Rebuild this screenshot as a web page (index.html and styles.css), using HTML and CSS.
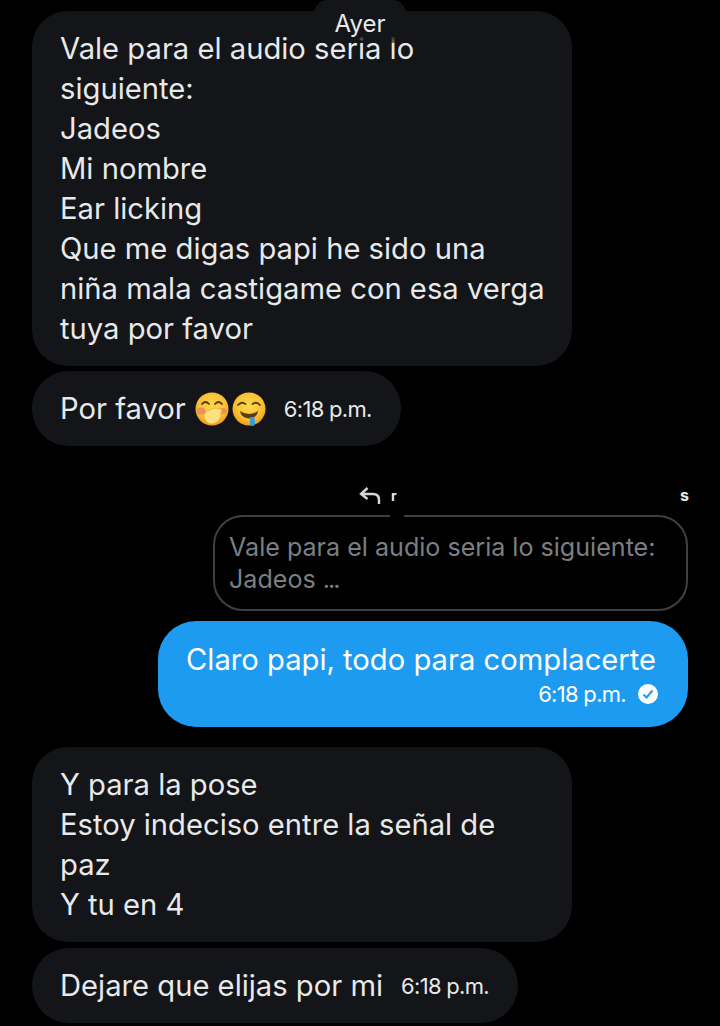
FILE: index.html
```html
<!DOCTYPE html>
<html lang="es">
<head>
  <meta charset="UTF-8">
  <meta name="viewport" content="width=device-width, initial-scale=1.0">
  <title>Mensajes</title>
  <link rel="stylesheet" href="styles.css">
</head>
<body>
  <div class="day-label">Ayer</div>

  <div class="thread">
    <div class="group">
      <div class="bubble in wide">Vale para el audio seria lo<br>siguiente:<br>Jadeos<br>Mi nombre<br>Ear licking<br>Que me digas papi he sido una<br>niña mala castigame con esa verga<br>tuya por favor</div>
      <div class="bubble in short">
        <span>Por favor</span>
        <span class="emojis">
          <svg width="34" height="34" viewBox="0 0 34 34">
            <defs>
              <radialGradient id="face" cx="50%" cy="40%" r="60%">
                <stop offset="0%" stop-color="#fcd84f"/>
                <stop offset="70%" stop-color="#f8c030"/>
                <stop offset="100%" stop-color="#ee9a1c"/>
              </radialGradient>
            </defs>
            <circle cx="17" cy="17" r="16.500" fill="url(#face)"/>
            <ellipse cx="6" cy="19" rx="4.500" ry="3.500" fill="#ee8f5c"/>
            <ellipse cx="28" cy="19" rx="3.500" ry="3" fill="#ee8f5c"/>
            <path d="M7 12q3.500-4 7 0M20 12q3.500-4 7 0" fill="none" stroke="#5b3a14" stroke-width="1.800" stroke-linecap="round"/>
            <path d="M9 24q0-3 3-5l8-3q2-.5 2.500 1l3 0q2 1 1 3l-1 2q1 1 0 3q-3 7-9 7q-7-1-7.500-8z" fill="#fce27e" stroke="#e6ad34" stroke-width=".8"/>
          </svg>
          <svg width="34" height="34" viewBox="0 0 34 34">
            <circle cx="17" cy="17" r="16.500" fill="url(#face)"/>
            <path d="M6 13q3.500-4 7.500-1M20.500 12q4-3 7.500 1" fill="none" stroke="#5b3a14" stroke-width="1.800" stroke-linecap="round"/>
            <path d="M8 19q9 6 18 0q-1 7-9 7.500q-8-.5-9-7.500z" fill="#5b3a14"/>
            <path d="M18 25h4.500l.5 6q0 3-2.500 3t-2.500-3z" fill="#2f9fd8"/>
          </svg>
        </span>
        <span class="time">6:18 p.m.</span>
      </div>
    </div>

    <div class="reply-head">
      <svg class="reply-icon" width="24" height="20" viewBox="0 0 24 20">
        <path d="M9.500 3L3 9L9.500 14M3.500 9H15q6 0 6 6v4" fill="none" stroke="#d6d6d6" stroke-width="2.400"/>
      </svg>
      <span class="reply-frag">r</span>
      <span class="reply-end">s</span>
    </div>

    <div class="quote">
      <span class="quote-notch"></span>
      Vale para el audio seria lo siguiente:<br>Jadeos <span class="dots">...</span>
    </div>

    <div class="bubble out">
      <div>Claro papi, todo para complacerte</div>
      <div class="out-meta">
        <span class="time">6:18 p.m.</span>
        <svg width="20" height="20" viewBox="0 0 20 20">
          <circle cx="10" cy="10" r="10" fill="#fff"/>
          <path d="M5.500 10.500l3 3l6-7" fill="none" stroke="#1d9bf0" stroke-width="2"/>
        </svg>
      </div>
    </div>

    <div class="group last">
      <div class="bubble in wide">Y para la pose<br>Estoy indeciso entre la señal de<br>paz<br>Y tu en 4</div>
      <div class="bubble in short">
        <span>Dejare que elijas por mi</span>
        <span class="time">6:18 p.m.</span>
      </div>
    </div>
  </div>
</body>
</html>
```

FILE: styles.css
```css
body {
  margin: 0;
  height: 1026px;
  overflow: hidden;
  position: relative;
  background: #000;
  font-family: 'Inter', 'Liberation Sans', sans-serif;
  font-size: 29.2px;
  color: #e7e9ea;
}
.thread {
  display: flex;
  flex-direction: column;
  align-items: flex-end;
  padding: 11px 32px 0;
}
.group {
  align-self: stretch;
  display: flex;
  flex-direction: column;
  align-items: flex-start;
  gap: 5px;
}
.group.last {
  margin-top: 20px;
  gap: 6px;
}
.bubble {
  background: #141518;
  line-height: 40px;
  box-sizing: border-box;
  white-space: nowrap;
}
.bubble.in {
  padding: 18px 28px 17px;
  border-radius: 36px;
}
.bubble.wide {
  width: 540px;
}
.bubble.short {
  display: flex;
  align-items: center;
  height: 75px;
  padding: 0 29px 0 28px;
  border-radius: 37px;
}
.time {
  font-size: 22px;
  letter-spacing: -0.7px;
  color: #e7e9ea;
  margin-left: 18px;
}
.emojis {
  display: flex;
  gap: 3px;
  margin-left: 9px;
}
.reply-head {
  align-self: stretch;
  display: flex;
  align-items: center;
  height: 30px;
  margin-top: 34px;
  padding-left: 326px;
  font-size: 14px;
  font-weight: 700;
  color: #e7e9ea;
}
.reply-frag {
  margin-left: 9px;
}
.reply-end {
  margin-left: auto;
  margin-right: -1px;
  font-size: 16px;
}
.quote {
  position: relative;
  box-sizing: border-box;
  width: 475px;
  height: 96px;
  margin-top: 5px;
  padding: 14px 14px 0;
  border: 2px solid #3e4043;
  border-radius: 30px;
  font-size: 25.100px;
  line-height: 32px;
  color: #7a7f84;
}
.quote-notch {
  position: absolute;
  top: -3px;
  left: 175px;
  width: 14px;
  height: 5px;
  background: #000;
}
.dots {
  letter-spacing: -2px;
}
.bubble.out {
  width: 530px;
  height: 106px;
  margin-top: 10px;
  padding: 19px 28px 0;
  background: #1d9bf0;
  color: #fff;
  border-radius: 38px;
  line-height: 40px;
}
.out-meta {
  display: flex;
  justify-content: flex-end;
  align-items: center;
  gap: 12px;
  margin-right: 2px;
  height: 27px;
}
.bubble.out .time {
  color: #fff;
}
.day-label {
  position: absolute;
  top: 0;
  left: 314px;
  width: 92px;
  height: 43px;
  background: linear-gradient(#141518 80%, rgba(20, 21, 24, 0.55));
  border-radius: 14px 14px 4px 4px;
  text-align: center;
  font-size: 24px;
  line-height: 48px;
  color: #e7e9ea;
  z-index: 2;
}
```
